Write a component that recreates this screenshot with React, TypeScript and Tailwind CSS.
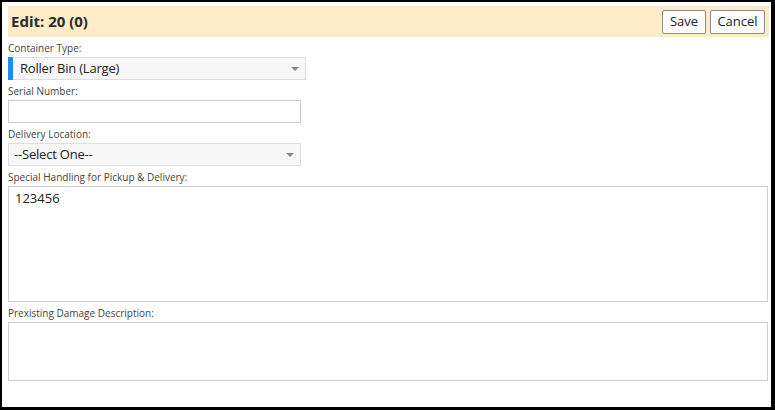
import type { ReactNode } from 'react'

const font = { fontFamily: '"Open Sans", "Noto Sans", sans-serif' }

function Label({ children }: { children: ReactNode }) {
  return (
    <div className="h-[20px] pt-[5px] text-[10px] leading-[13px] text-[#444]">
      {children}
    </div>
  )
}

function Caret() {
  return (
    <svg width="8" height="4" viewBox="0 0 8 4" className="shrink-0">
      <path d="M0 0h8L4 4z" fill="#888" />
    </svg>
  )
}

function SelectBox({
  value,
  width,
  marked,
}: {
  value: string
  width: string
  marked?: boolean
}) {
  return (
    <div className={`flex h-[23px] items-stretch ${width}`}>
      {marked ? <div className="w-[5px] shrink-0 bg-[#1a8cff]" /> : null}
      <div
        className={`flex flex-1 items-center justify-between border border-[#ddd] bg-[#f7f7f7] pr-[6px] text-[13px] tracking-[-0.2px] text-[#222] ${
          marked ? 'border-l-0 pl-[7px]' : 'pl-[5px]'
        }`}
      >
        <span>{value}</span>
        <Caret />
      </div>
    </div>
  )
}

export default function App() {
  return (
    <div
      className="h-[410px] w-[775px] border-t-2 border-r-[4px] border-b-[3px] border-l-2 border-black bg-white pt-[4px] pr-[2px] pl-[6px]"
      style={font}
    >
      <header className="flex h-[31px] items-center justify-between bg-[#ffebc8] pr-[4px] pl-[3px]">
        <h2 className="text-[15px] font-bold text-[#2b2b2b]">Edit: 20 (0)</h2>
        <div className="flex gap-[4px]">
          <button
            className="h-[24px] w-[44px] rounded-[2px] border border-[#8a8a8a] bg-white text-[13px] text-[#222]"
            type="button"
          >
            Save
          </button>
          <button
            className="h-[24px] w-[55px] rounded-[2px] border border-[#8a8a8a] bg-white text-[13px] text-[#222]"
            type="button"
          >
            Cancel
          </button>
        </div>
      </header>

      <Label>Container Type:</Label>
      <SelectBox value="Roller Bin (Large)" width="w-[298px]" marked />

      <Label>Serial Number:</Label>
      <div className="h-[23px] w-[293px] border border-[#ccc] bg-white" />

      <Label>Delivery Location:</Label>
      <SelectBox value="--Select One--" width="w-[293px]" />

      <Label>Special Handling for Pickup &amp; Delivery:</Label>
      <div className="h-[116px] w-[760px] border border-[#ccc] bg-white px-[6px] pt-[2px] text-[13px] text-[#222]">
        123456
      </div>

      <Label>Prexisting Damage Description:</Label>
      <div className="h-[59px] w-[760px] border border-[#ccc] bg-white" />
    </div>
  )
}
